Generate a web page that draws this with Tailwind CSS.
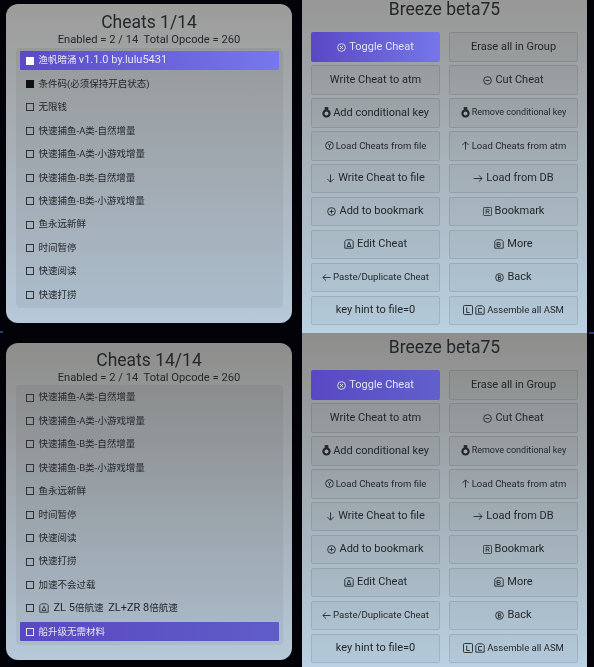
<!DOCTYPE html>
<html lang="en">
<head>
  <meta charset="UTF-8" />
  <title>Breeze</title>
  <script src="https://cdn.jsdelivr.net/npm/@tailwindcss/browser@4"></script>
</head>
<body class="bg-black">
<div class="relative w-[594px] h-[667px] overflow-hidden bg-[#020208] flex font-['Roboto','Noto_Sans_CJK_SC',sans-serif] text-[#24272a] blur-[0.3px]">

  <!-- cheat lists -->
  <div class="w-[302px] pl-[6px] pr-[10px] pt-[4px] flex flex-col gap-[20px]">
    <section class="h-[319px] rounded-[12px] bg-gradient-to-b from-[#9c9c9a] to-[#b6c9da] flex flex-col items-center pt-[8px]">
      <h1 class="text-[17.5px] leading-[21px]">Cheats 1/14</h1>
      <p class="text-[11.2px] leading-[13px] whitespace-pre">Enabled = 2 / 14  Total Opcode = 260</p>
      <ul class="mt-[2px] w-[267px] h-[260px] rounded-[4px] bg-black/5 px-[4px] pt-[3px] flex flex-col gap-[4.45px] text-[9.5px]">
        <li class="h-[19px] flex items-center gap-[5px] px-[6px] rounded-[1px] bg-gradient-to-r from-[#5a4ac6] to-[#7877ee] text-[#e4e6f4]"><span class="w-[8px] h-[8px] bg-white"></span><span>渔帆暗涌 <span class="text-[11px]">v1.1.0 by.lulu5431</span></span></li>
        <li class="h-[19px] flex items-center gap-[5px] px-[6px]"><span class="w-[8px] h-[8px] bg-[#111]"></span><span>条件码(必须保持开启状态)</span></li>
        <li class="h-[19px] flex items-center gap-[5px] px-[6px]"><span class="w-[8px] h-[8px] border border-[#333]"></span><span>无限钱</span></li>
        <li class="h-[19px] flex items-center gap-[5px] px-[6px]"><span class="w-[8px] h-[8px] border border-[#333]"></span><span>快速捕鱼-A类-自然增量</span></li>
        <li class="h-[19px] flex items-center gap-[5px] px-[6px]"><span class="w-[8px] h-[8px] border border-[#333]"></span><span>快速捕鱼-A类-小游戏增量</span></li>
        <li class="h-[19px] flex items-center gap-[5px] px-[6px]"><span class="w-[8px] h-[8px] border border-[#333]"></span><span>快速捕鱼-B类-自然增量</span></li>
        <li class="h-[19px] flex items-center gap-[5px] px-[6px]"><span class="w-[8px] h-[8px] border border-[#333]"></span><span>快速捕鱼-B类-小游戏增量</span></li>
        <li class="h-[19px] flex items-center gap-[5px] px-[6px]"><span class="w-[8px] h-[8px] border border-[#333]"></span><span>鱼永远新鲜</span></li>
        <li class="h-[19px] flex items-center gap-[5px] px-[6px]"><span class="w-[8px] h-[8px] border border-[#333]"></span><span>时间暂停</span></li>
        <li class="h-[19px] flex items-center gap-[5px] px-[6px]"><span class="w-[8px] h-[8px] border border-[#333]"></span><span>快速阅读</span></li>
        <li class="h-[19px] flex items-center gap-[5px] px-[6px]"><span class="w-[8px] h-[8px] border border-[#333]"></span><span>快速打捞</span></li>
      </ul>
    </section>

    <section class="h-[317px] rounded-[12px] bg-gradient-to-b from-[#8e8d8b] to-[#b6c9da] flex flex-col items-center pt-[7px]">
      <h1 class="text-[17.5px] leading-[21px]">Cheats 14/14</h1>
      <p class="text-[11.2px] leading-[13px] whitespace-pre">Enabled = 2 / 14  Total Opcode = 260</p>
      <ul class="mt-[1px] w-[267px] h-[260px] rounded-[4px] bg-black/5 px-[4px] pt-[3px] flex flex-col gap-[4.45px] text-[9.5px]">
        <li class="h-[19px] flex items-center gap-[5px] px-[6px]"><span class="w-[8px] h-[8px] border border-[#333]"></span><span>快速捕鱼-A类-自然增量</span></li>
        <li class="h-[19px] flex items-center gap-[5px] px-[6px]"><span class="w-[8px] h-[8px] border border-[#333]"></span><span>快速捕鱼-A类-小游戏增量</span></li>
        <li class="h-[19px] flex items-center gap-[5px] px-[6px]"><span class="w-[8px] h-[8px] border border-[#333]"></span><span>快速捕鱼-B类-自然增量</span></li>
        <li class="h-[19px] flex items-center gap-[5px] px-[6px]"><span class="w-[8px] h-[8px] border border-[#333]"></span><span>快速捕鱼-B类-小游戏增量</span></li>
        <li class="h-[19px] flex items-center gap-[5px] px-[6px]"><span class="w-[8px] h-[8px] border border-[#333]"></span><span>鱼永远新鲜</span></li>
        <li class="h-[19px] flex items-center gap-[5px] px-[6px]"><span class="w-[8px] h-[8px] border border-[#333]"></span><span>时间暂停</span></li>
        <li class="h-[19px] flex items-center gap-[5px] px-[6px]"><span class="w-[8px] h-[8px] border border-[#333]"></span><span>快速阅读</span></li>
        <li class="h-[19px] flex items-center gap-[5px] px-[6px]"><span class="w-[8px] h-[8px] border border-[#333]"></span><span>快速打捞</span></li>
        <li class="h-[19px] flex items-center gap-[5px] px-[6px]"><span class="w-[8px] h-[8px] border border-[#333]"></span><span>加速不会过载</span></li>
        <li class="h-[19px] flex items-center gap-[5px] px-[6px]"><span class="w-[8px] h-[8px] border border-[#333]"></span>
          <svg class="w-[10px] h-[10px]" viewBox="0 0 10 10" fill="none" stroke="#333" stroke-width="0.9"><path d="M2.5 .8h5l1.7 1.7v6.7H.8V2.5z"/><path d="M3 7.5 5 3l2 4.5M3 7.5h4"/></svg>
          <span class="whitespace-pre"><span class="text-[11px]">ZL 5</span>倍航速  <span class="text-[11px]">ZL+ZR 8</span>倍航速</span></li>
        <li class="h-[19px] flex items-center gap-[5px] px-[6px] rounded-[1px] bg-gradient-to-r from-[#5a48c2] to-[#5f5cc8] text-[#e4e6f4]"><span class="w-[8px] h-[8px] border border-[#e4e6f4]"></span><span>船升级无需材料</span></li>
      </ul>
    </section>
  </div>

  <!-- button menus -->
  <div class="w-[285px] flex flex-col">
    <section class="h-[333px] shrink-0 bg-gradient-to-b from-[#979796] to-[#b9d1e2] flex flex-col items-center">
      <h2 class="text-[17.5px] leading-[18px]">Breeze beta75</h2>
      <div id="menu" class="mt-[14.4px] grid grid-cols-[129px_129px] gap-x-[9px] gap-y-[3.4px] text-[11px]">
        <button class="h-[29.5px] flex items-center justify-center gap-[3px] rounded-[2px] bg-gradient-to-r from-[#5a48c4] to-[#7676ea] text-[#dfe2f4]">
          <svg class="w-[9px] h-[9px]" viewBox="0 0 10 10" fill="none" stroke="currentColor"><circle cx="5" cy="5" r="4.3"/><path d="M3.3 3.3l3.4 3.4M6.7 3.3 3.3 6.7"/></svg>Toggle Cheat</button>
        <button class="h-[29.5px] flex items-center justify-center rounded-[2px] border border-black/10 bg-black/[0.03]">Erase all in Group</button>
        <button class="h-[29.5px] flex items-center justify-center rounded-[2px] border border-black/10 bg-black/[0.03]">Write Cheat to atm</button>
        <button class="h-[29.5px] flex items-center justify-center gap-[3px] rounded-[2px] border border-black/10 bg-black/[0.03]">
          <svg class="w-[9px] h-[9px]" viewBox="0 0 10 10" fill="none" stroke="currentColor"><circle cx="5" cy="5" r="4.3"/><path d="M2.8 5h4.4"/></svg>Cut Cheat</button>
        <button class="h-[29.5px] flex items-center justify-center gap-[2px] rounded-[2px] border border-black/10 bg-black/[0.03]">
          <svg class="w-[9px] h-[11px]" viewBox="0 0 10 12" fill="currentColor"><path d="M3 0h4v3H3z"/><circle cx="5" cy="7" r="4.6"/><circle cx="5" cy="7" r="2.2" fill="#a8a8a8"/></svg>Add conditional key</button>
        <button class="h-[29.5px] flex items-center justify-center gap-[2px] rounded-[2px] border border-black/10 bg-black/[0.03] text-[9px]">
          <svg class="w-[9px] h-[11px]" viewBox="0 0 10 12" fill="currentColor"><path d="M3 0h4v3H3z"/><circle cx="5" cy="7" r="4.6"/><circle cx="5" cy="7" r="2.2" fill="#a8a8a8"/></svg>Remove conditional key</button>
        <button class="h-[29.5px] flex items-center justify-center gap-[2px] rounded-[2px] border border-black/10 bg-black/[0.03] text-[9.5px]">
          <svg class="w-[9px] h-[9px]" viewBox="0 0 10 10" fill="none" stroke="currentColor"><circle cx="5" cy="5" r="4.3"/><path d="M3.3 3 5 5.2 6.7 3M5 5.2V7.5"/></svg>Load Cheats from file</button>
        <button class="h-[29.5px] flex items-center justify-center gap-[2px] rounded-[2px] border border-black/10 bg-black/[0.03] text-[9.5px]">
          <svg class="w-[9px] h-[9px]" viewBox="0 0 10 10" fill="none" stroke="currentColor"><path d="M5 9.5V1M1.5 4.5 5 1l3.5 3.5"/></svg>Load Cheats from atm</button>
        <button class="h-[29.5px] flex items-center justify-center gap-[3px] rounded-[2px] border border-black/10 bg-black/[0.03]">
          <svg class="w-[9px] h-[9px]" viewBox="0 0 10 10" fill="none" stroke="currentColor"><path d="M5 .5V9M1.5 5.5 5 9l3.5-3.5"/></svg>Write Cheat to file</button>
        <button class="h-[29.5px] flex items-center justify-center gap-[3px] rounded-[2px] border border-black/10 bg-black/[0.03]">
          <svg class="w-[10px] h-[9px]" viewBox="0 0 11 10" fill="none" stroke="currentColor"><path d="M.5 5H10M6.5 1.5 10 5 6.5 8.5"/></svg>Load from DB</button>
        <button class="h-[29.5px] flex items-center justify-center gap-[3px] rounded-[2px] border border-black/10 bg-black/[0.03]">
          <svg class="w-[9px] h-[9px]" viewBox="0 0 10 10" fill="none" stroke="currentColor"><circle cx="5" cy="5" r="4.3"/><path d="M2.8 5h4.4M5 2.8v4.4"/></svg>Add to bookmark</button>
        <button class="h-[29.5px] flex items-center justify-center gap-[3px] rounded-[2px] border border-black/10 bg-black/[0.03]">
          <svg class="w-[9px] h-[9px]" viewBox="0 0 10 10" fill="none" stroke="currentColor" stroke-width="0.9"><rect x=".5" y=".5" width="9" height="9" rx="1"/><path d="M3.5 7.5v-5h2a1.3 1.3 0 0 1 0 2.7h-2M5.3 5.2 7 7.5"/></svg>Bookmark</button>
        <button class="h-[29.5px] flex items-center justify-center gap-[3px] rounded-[2px] border border-black/10 bg-black/[0.03]">
          <svg class="w-[10px] h-[10px]" viewBox="0 0 10 10" fill="none" stroke="currentColor" stroke-width="0.9"><path d="M2.5 .8h5l1.7 1.7v6.7H.8V2.5z"/><path d="M3 7.5 5 3l2 4.5M3 7.5h4"/></svg>Edit Cheat</button>
        <button class="h-[29.5px] flex items-center justify-center gap-[3px] rounded-[2px] border border-black/10 bg-black/[0.03]">
          <svg class="w-[10px] h-[10px]" viewBox="0 0 10 10" fill="none" stroke="currentColor" stroke-width="0.9"><path d="M2.5 .8h5l1.7 1.7v6.7H.8V2.5z"/><path d="M3 7.5V3.5h2.3a1 1 0 0 1 0 2H3m2.3 0a1 1 0 0 1 0 2H3"/></svg>More</button>
        <button class="h-[29.5px] flex items-center justify-center gap-[2px] rounded-[2px] border border-black/10 bg-black/[0.03] text-[9.6px]">
          <svg class="w-[9px] h-[9px]" viewBox="0 0 10 10" fill="none" stroke="currentColor"><path d="M9.5 5H1M4.5 1.5 1 5l3.5 3.5"/></svg>Paste/Duplicate Cheat</button>
        <button class="h-[29.5px] flex items-center justify-center gap-[3px] rounded-[2px] border border-black/10 bg-black/[0.03]">
          <svg class="w-[9px] h-[9px]" viewBox="0 0 10 10" fill="none" stroke="currentColor"><circle cx="5" cy="5" r="4.3"/><path d="M3.7 7.3V2.7h1.5a1.1 1.1 0 0 1 0 2.3H3.7h1.7a1.15 1.15 0 0 1 0 2.3z"/></svg>Back</button>
        <button class="h-[29.5px] flex items-center justify-center rounded-[2px] border border-black/10 bg-black/[0.03]">key hint to file=0</button>
        <button class="h-[29.5px] flex items-center justify-center gap-[2px] rounded-[2px] border border-black/10 bg-black/[0.03] text-[9.5px]">
          <svg class="w-[10px] h-[10px]" viewBox="0 0 10 10" fill="none" stroke="currentColor" stroke-width="0.9"><rect x=".5" y=".5" width="9" height="9" rx="1"/><path d="M3.7 2.5v5h3"/></svg>
          <svg class="w-[10px] h-[10px]" viewBox="0 0 10 10" fill="none" stroke="currentColor" stroke-width="0.9"><path d="M2.5 .8h5l1.7 1.7v6.7H.8V2.5z"/><path d="M7 3.5H3.5v3.8H7"/></svg>Assemble all ASM</button>
      </div>
    </section>
    <section class="h-[334px] shrink-0 bg-gradient-to-b from-[#8e8d8b] to-[#b9d1e2] flex flex-col items-center">
      <h2 class="text-[17.5px] leading-[18px] mt-[5px]">Breeze beta75</h2>
      <div id="menu2" class="mt-[14.4px] grid grid-cols-[129px_129px] gap-x-[9px] gap-y-[3.4px] text-[11px]"></div>
    </section>
  </div>

  <!-- little cursor marks at the seam -->
  <span class="absolute left-0 top-[331px] w-[3px] h-[2px] bg-[#34347a]"></span>
  <span class="absolute right-0 top-[332px] w-[5px] h-[2px] bg-[#34347a]"></span>
</div>

<script>
  // second screen shows the same menu, focus gradient is just dimmer
  const menu2 = document.getElementById("menu2");
  menu2.innerHTML = document.getElementById("menu").innerHTML;
  menu2.firstElementChild.classList.replace("to-[#7676ea]", "to-[#6060cc]");
</script>
</body>
</html>
